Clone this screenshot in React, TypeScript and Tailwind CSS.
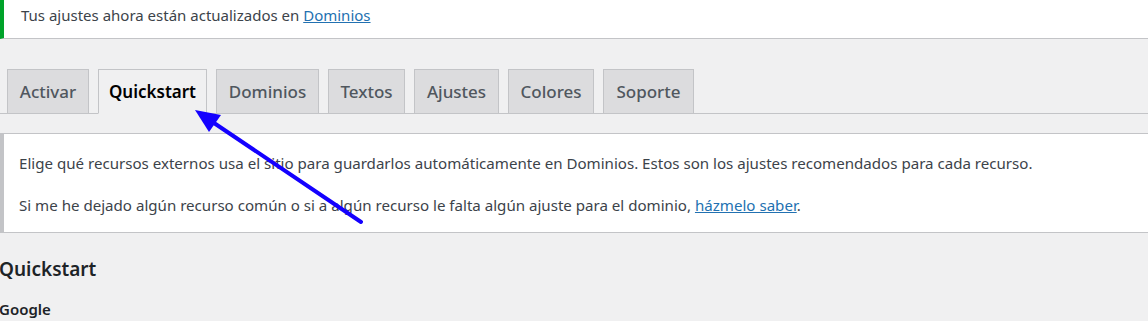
const tabs = [
  { label: "Activar", w: "w-[82px]" },
  { label: "Quickstart", w: "w-[109px]", active: true },
  { label: "Dominios", w: "w-[103px]" },
  { label: "Textos", w: "w-[77px]" },
  { label: "Ajustes", w: "w-[85px]" },
  { label: "Colores", w: "w-[86px]" },
  { label: "Soporte", w: "w-[91px]" },
];

function Arrow() {
  // blue annotation arrow drawn over the page
  return (
    <svg className="absolute left-0 top-0 pointer-events-none" width="1148" height="321">
      <line x1="361" y1="222" x2="214" y2="123" stroke="#1400ff" strokeWidth="4" strokeLinecap="round" />
      <polygon points="195,110 221,115 209,132" fill="#1400ff" />
    </svg>
  );
}

export default function App() {
  return (
    <div className="relative h-[321px] overflow-hidden bg-[#f0f0f1] font-['Noto_Sans',sans-serif]">
      {/* notice */}
      <div className="h-[39px] bg-white border-l-4 border-[#00a32a] border-b border-b-[#c3c4c7] pl-[17px] pt-[4px] text-[15px] text-[#3c434a]">
        Tus ajustes ahora están actualizados en{" "}
        <a href="#" className="text-[#2271b1] underline">Dominios</a>
      </div>

      {/* tabs */}
      <div className="mt-[30px] flex gap-[9px] pl-[7px] border-b border-[#c3c4c7] h-[45px]">
        {tabs.map((t) => (
          <div
            key={t.label}
            className={`${t.w} h-[45px] flex items-center justify-center border border-[#c3c4c7] text-[17px] font-medium ${
              t.active ? "bg-[#f0f0f1] text-black font-semibold border-b-[#f0f0f1]" : "bg-[#dcdcde] text-[#50575e]"
            }`}
          >
            {t.label}
          </div>
        ))}
      </div>

      {/* info box */}
      <div className="mt-[19px] bg-white border-l-4 border-l-[#c3c4c7] border-y border-y-[#c3c4c7] h-[100px] pl-[15px] pt-[18px] flex flex-col gap-[19px] text-[15.1px] text-[#3c434a]">
        <p>Elige qué recursos externos usa el sitio para guardarlos automáticamente en Dominios. Estos son los ajustes recomendados para cada recurso.</p>
        <p>
          Si me he dejado algún recurso común o si a algún recurso le falta algún ajuste para el dominio,{" "}
          <a href="#" className="text-[#2271b1] underline">házmelo saber</a>.
        </p>
      </div>

      <h2 className="mt-[22px] -ml-[1px] text-[19px] font-semibold text-[#1d2327]">Quickstart</h2>
      <h3 className="mt-[14px] -ml-[1px] text-[15px] font-semibold text-[#1d2327]">Google</h3>

      <Arrow />
    </div>
  );
}
